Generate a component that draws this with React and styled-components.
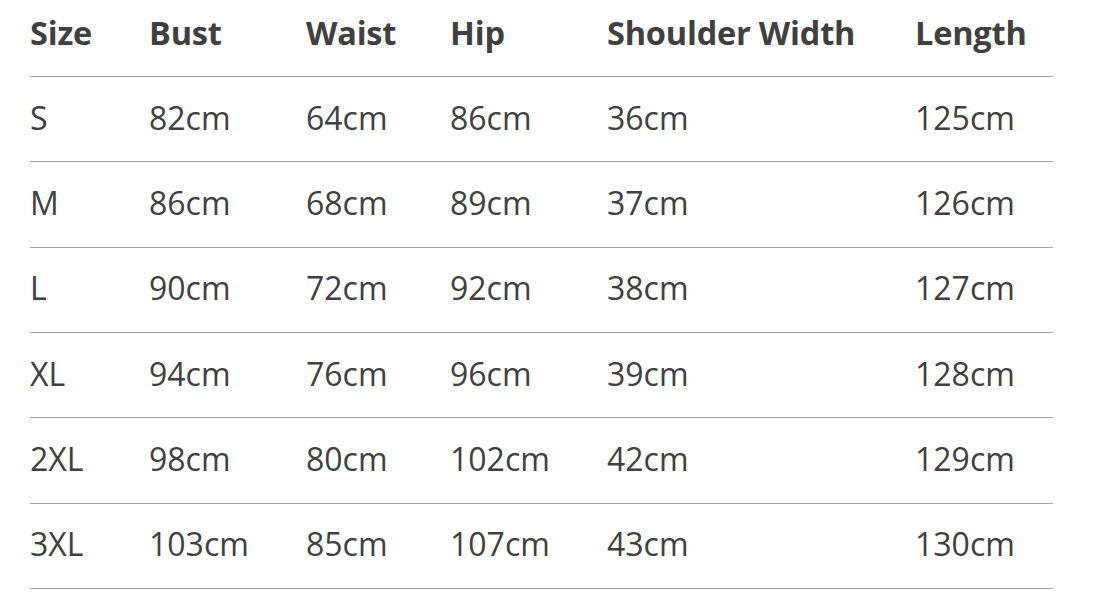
import React from "react";
import styled, { createGlobalStyle } from "styled-components";

const Global = createGlobalStyle`
  html, body { margin: 0; padding: 0; background: #fff; }
  body { font-family: "Open Sans", "Noto Sans", sans-serif; color: #404040; }
`;

const Table = styled.div`
  padding: 0 46px 0 30px;
  display: flex;
  flex-direction: column;
`;

const COLS = "119px 157px 144px 157px 308px 1fr";

const Row = styled.div`
  display: grid;
  grid-template-columns: ${COLS};
  align-items: center;
  box-sizing: border-box;
  height: ${(p) => (p.$head ? "77px" : "85.33px")};
  padding-bottom: ${(p) => (p.$head ? "10px" : "3px")};
  border-bottom: 1px solid #a3a3a3;
`;

const Cell = styled.div`
  font-size: ${(p) => (p.$head ? "32.5px" : "32px")};
  font-weight: ${(p) => (p.$head ? 700 : 400)};
  letter-spacing: ${(p) => (p.$head ? "-0.2px" : "0")};
  color: #404040;
  white-space: nowrap;
  line-height: 1;
`;

const head = ["Size", "Bust", "Waist", "Hip", "Shoulder Width", "Length"];
const rows = [
  ["S", "82cm", "64cm", "86cm", "36cm", "125cm"],
  ["M", "86cm", "68cm", "89cm", "37cm", "126cm"],
  ["L", "90cm", "72cm", "92cm", "38cm", "127cm"],
  ["XL", "94cm", "76cm", "96cm", "39cm", "128cm"],
  ["2XL", "98cm", "80cm", "102cm", "42cm", "129cm"],
  ["3XL", "103cm", "85cm", "107cm", "43cm", "130cm"],
];

export default function App() {
  return (
    <>
      <Global />
      <Table>
        <Row $head>
          {head.map((h) => (
            <Cell $head key={h}>{h}</Cell>
          ))}
        </Row>
        {rows.map((r) => (
          <Row key={r[0]}>
            {r.map((c, i) => (
              <Cell key={i}>{c}</Cell>
            ))}
          </Row>
        ))}
      </Table>
    </>
  );
}
